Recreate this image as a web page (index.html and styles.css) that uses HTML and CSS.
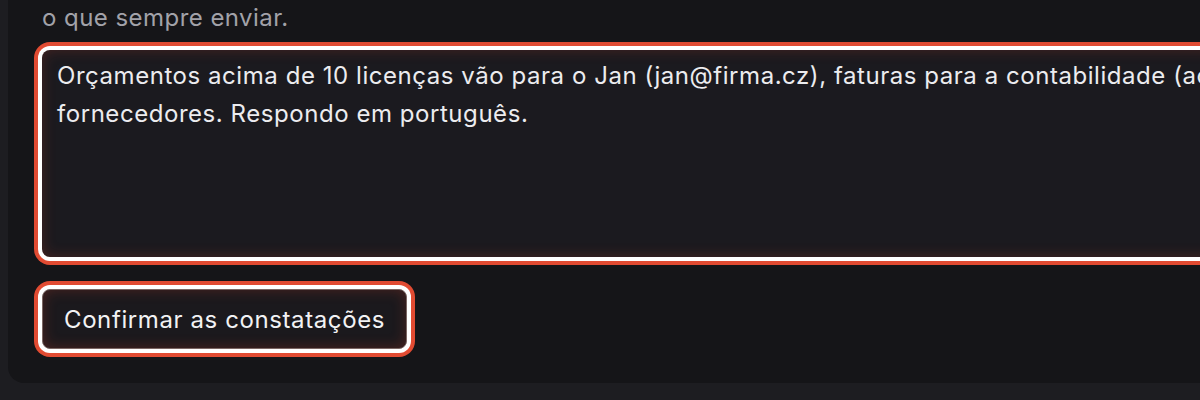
FILE: index.html
```html
<!DOCTYPE html>
<html lang="pt">
<head>
<meta charset="utf-8">
<title>Constatações</title>
<link rel="stylesheet" href="styles.css">
</head>
<body>
<section class="card">
  <p class="hint">o que sempre enviar.</p>
  <textarea class="notes" aria-label="Constatações">Orçamentos acima de 10 licenças vão para o Jan (jan@firma.cz), faturas para a contabilidade (accounting@firma.cz), o resto aos
fornecedores. Respondo em português.</textarea>
  <div class="actions">
    <button class="confirm" type="button">Confirmar as constatações</button>
  </div>
</section>
</body>
</html>
```
FILE: styles.css
```css
html, body {
  overflow: hidden;
}
body {
  margin: 0 0 0 8px;
  background: #1d1d21;
  font-family: Inter, "Noto Sans", sans-serif;
}
.card {
  box-sizing: border-box;
  width: 1900px;
  margin-top: -20px;
  padding: 20px 34px 34px 34px;
  background: #151518;
  border-radius: 16px;
  display: flex;
  flex-direction: column;
}
.hint {
  margin: 0 0 14px 0;
  font-size: 24px;
  line-height: 36px;
  letter-spacing: 0.45px;
  color: #a2a2a9;
}
.notes {
  box-sizing: border-box;
  width: 100%;
  height: 207px;
  padding: 7px 15px;
  resize: none;
  border: none;
  border-radius: 8px;
  background: #1b1a1f;
  color: #ececef;
  font-family: Inter, "Noto Sans", sans-serif;
  font-size: 24px;
  line-height: 38px;
  letter-spacing: 0.55px;
  outline: none;
  box-shadow: inset 0 0 14px rgba(190, 60, 40, 0.28), 0 0 0 4px #ffffff, 0 0 0 8px #e14b32;
}
.actions {
  display: flex;
  margin-top: 32px;
}
.confirm {
  box-sizing: border-box;
  height: 60px;
  padding: 0 21px;
  border: 1px solid #7a6663;
  border-radius: 8px;
  background: #1b191d;
  color: #f2f2f4;
  font-family: Inter, "Noto Sans", sans-serif;
  font-size: 24px;
  font-weight: 400;
  letter-spacing: 0.6px;
  box-shadow: inset 0 0 14px rgba(190, 60, 40, 0.3), 0 0 0 4px #ffffff, 0 0 0 8px #e14b32;
}
```
